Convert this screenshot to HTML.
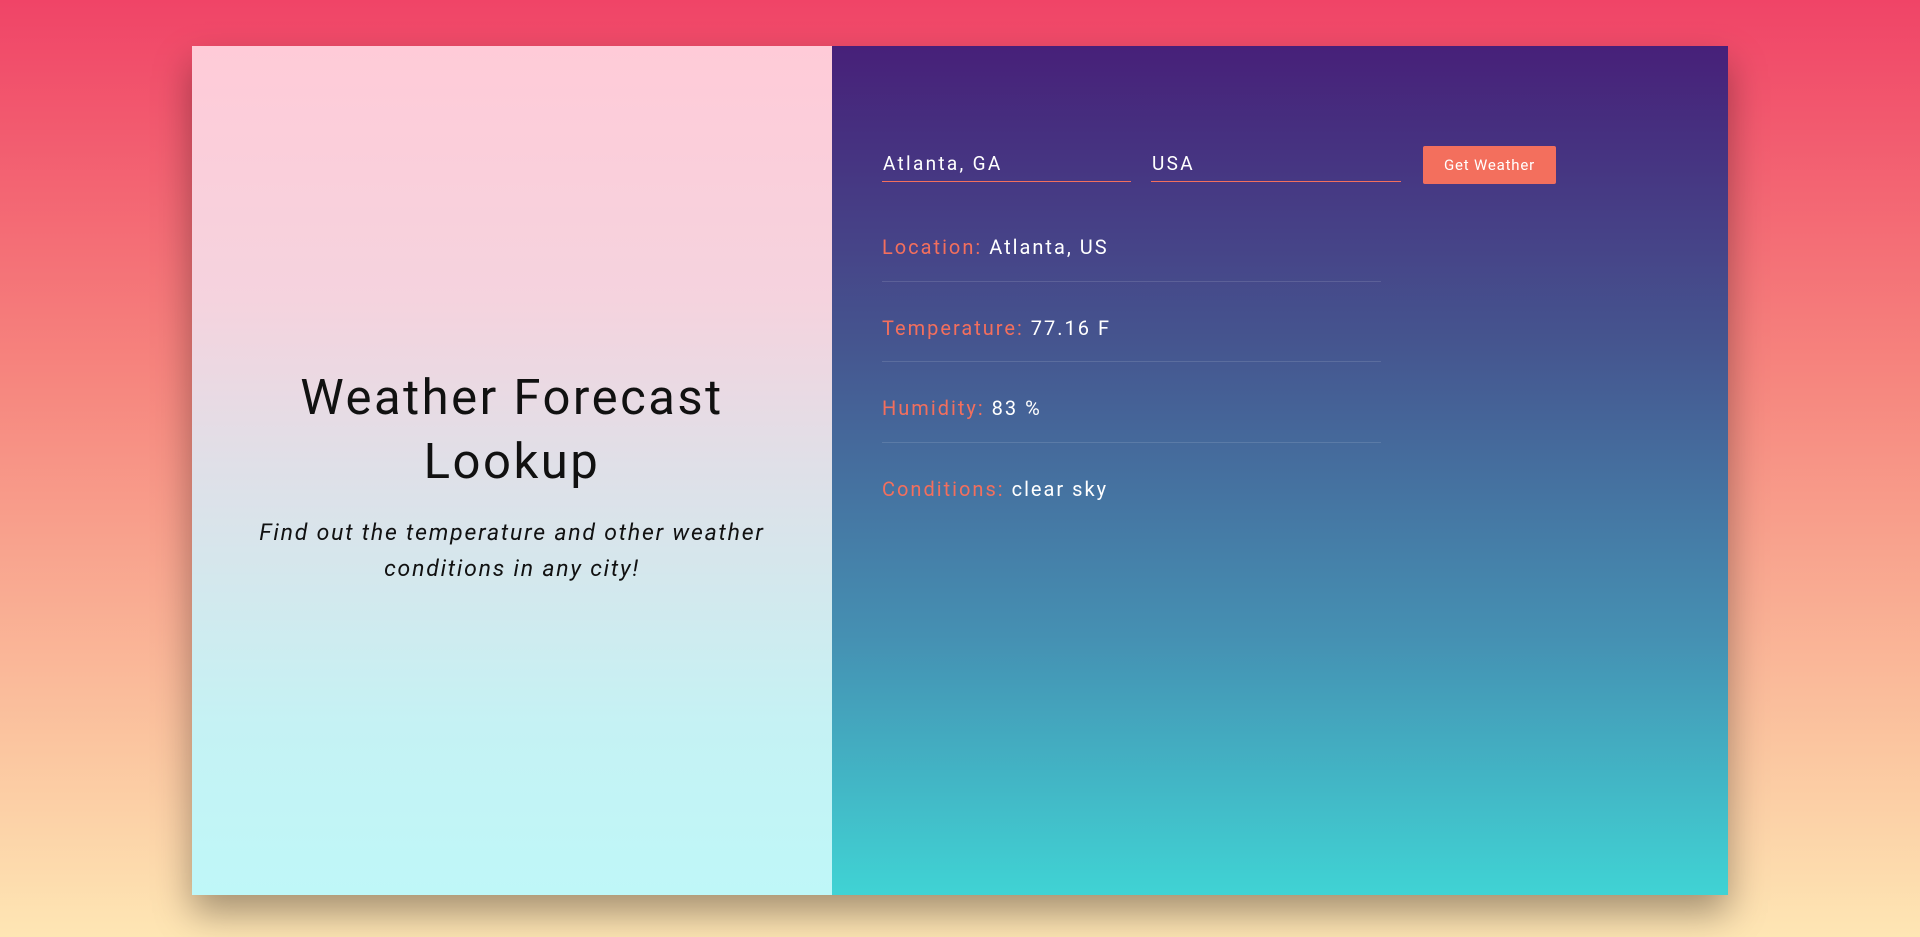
<!DOCTYPE html>
<html><head><meta charset="utf-8"><style>
*{margin:0;padding:0;box-sizing:border-box}
html,body{width:1920px;height:937px;overflow:hidden}
body{background:linear-gradient(180deg,#f04467 0%,#f6857e 40%,#fbc6a0 80%,#fee6b4 100%);font-family:"Roboto","Liberation Sans",sans-serif;position:relative}
.card{position:absolute;left:192px;top:46px;width:1536px;height:849px;box-shadow:0 18px 35px rgba(0,0,0,.35);display:flex}
.left{width:640px;height:100%;background:linear-gradient(180deg,#ffcbd8 0%,#f5d3de 30%,#dfe0e8 50%,#c5f2f4 80%,#bff7f8 100%);text-align:center;position:relative}
.left h1{position:absolute;top:320px;left:0;width:100%;font-weight:400;font-size:49px;line-height:64px;letter-spacing:2.5px;color:#111}
.left p{position:absolute;top:469px;left:0;width:100%;font-style:italic;font-size:23px;line-height:36px;letter-spacing:1.8px;color:#111}
.right{flex:1;height:100%;background:linear-gradient(180deg,#472079 0%,#45558f 35%,#4591b3 70%,#40d3d4 100%);position:relative;color:#fff}
.inp{position:absolute;height:36px;border-bottom:1px solid #f36f5d;font-size:19px;letter-spacing:2.3px;padding-left:1px;padding-top:6px}
.btn{position:absolute;left:591px;top:100px;width:133px;height:38px;background:#f36f5d;border-radius:2px;font-size:15px;letter-spacing:.8px;text-align:center;line-height:38px}
.row{position:absolute;left:50px;font-size:20px;letter-spacing:2px}
.row span{color:#f36f5d}
.sep{position:absolute;left:50px;width:499px;height:1px;background:rgba(255,255,255,.12)}
</style></head><body>
<div class="card">
<div class="left"><h1>Weather Forecast<br>Lookup</h1><p>Find out the temperature and other weather<br>conditions in any city!</p></div>
<div class="right">
<div class="inp" style="left:50px;width:249px;top:100px">Atlanta, GA</div>
<div class="inp" style="left:319px;width:250px;top:100px">USA</div>
<div class="btn">Get Weather</div>
<div class="row" style="top:189px"><span>Location:</span> Atlanta, US</div>
<div class="sep" style="top:235px"></div>
<div class="row" style="top:270px"><span>Temperature:</span> 77.16 F</div>
<div class="sep" style="top:315px"></div>
<div class="row" style="top:350px"><span>Humidity:</span> 83 %</div>
<div class="sep" style="top:396px"></div>
<div class="row" style="top:431px"><span>Conditions:</span> clear sky</div>
</div>
</div>
</body></html>
